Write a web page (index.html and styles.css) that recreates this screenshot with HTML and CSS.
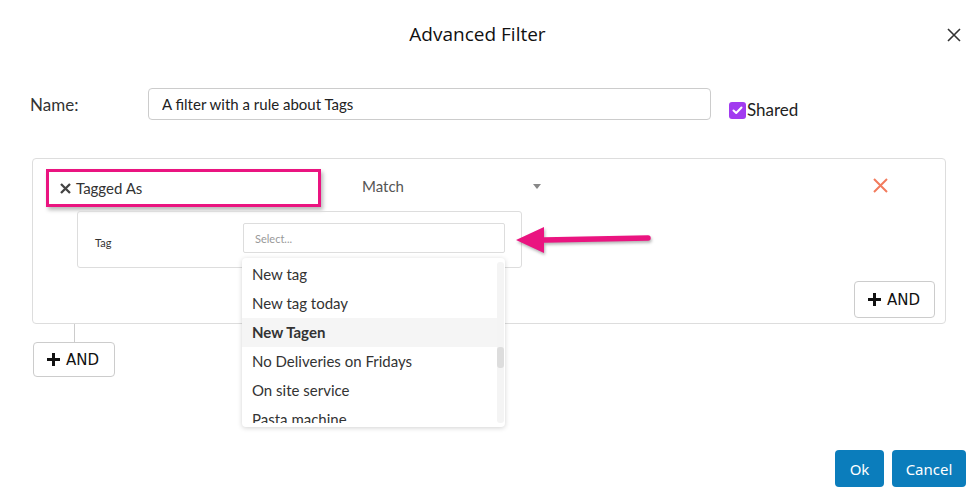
FILE: index.html
```html
<!DOCTYPE html>
<html lang="en">
<head>
    <meta charset="UTF-8">
    <title>Advanced Filter</title>
    <link rel="stylesheet" href="styles.css">
</head>
<body>
    <div class="modal">
        <header class="modal-header">
            <span></span>
            <h2>Advanced Filter</h2>
            <button class="close" aria-label="Close">
                <svg width="14" height="14" viewBox="0 0 14 14"><path d="M1 1L13 13M13 1L1 13" stroke="#333" stroke-width="1.6"/></svg>
            </button>
        </header>

        <div class="name-row">
            <label class="name-label">Name:</label>
            <input class="name-input" type="text" value="A filter with a rule about Tags">
            <label class="shared">
                <span class="check">
                    <svg width="11" height="9" viewBox="0 0 11 9"><path d="M1.5 4.5L4.2 7L9.5 1.5" fill="none" stroke="#fff" stroke-width="2" stroke-linecap="round" stroke-linejoin="round"/></svg>
                </span>Shared
            </label>
        </div>

        <div class="rule">
            <div class="rule-head">
                <div class="field-chip">
                    <svg width="11" height="11" viewBox="0 0 11 11"><path d="M1 1L10 10M10 1L1 10" stroke="#444" stroke-width="2.3"/></svg>
                    <span>Tagged As</span>
                </div>
                <div class="match">Match <span class="caret"></span></div>
                <button class="remove" aria-label="Remove">
                    <svg width="15" height="15" viewBox="0 0 15 15"><path d="M1 1L14 14M14 1L1 14" stroke="#f27b5d" stroke-width="2"/></svg>
                </button>
            </div>

            <div class="sub-rule">
                <span class="sub-label">Tag</span>
                <div class="select-wrap">
                    <div class="select">Select...</div>
                    <div class="menu">
                        <ul class="menu-list">
                            <li>New tag</li>
                            <li>New tag today</li>
                            <li class="active">New Tagen</li>
                            <li>No Deliveries on Fridays</li>
                            <li>On site service</li>
                            <li>Pasta machine</li>
                        </ul>
                        <div class="scroll"><div class="thumb"></div></div>
                    </div>
                    <svg class="arrow" width="150" height="42" viewBox="0 0 150 42">
                        <path d="M34 20L138 18" stroke="#ea1480" stroke-width="5.5" stroke-linecap="round"/>
                        <path d="M6 20L34 7L34 33Z" fill="#ea1480"/>
                    </svg>
                </div>
            </div>

            <button class="and-btn inner">
                <svg width="13" height="13" viewBox="0 0 13 13"><path d="M6.5 0V13M0 6.5H13" stroke="#111" stroke-width="3"/></svg>
                AND
            </button>
        </div>

        <div class="connector"></div>
        <button class="and-btn outer">
            <svg width="13" height="13" viewBox="0 0 13 13"><path d="M6.5 0V13M0 6.5H13" stroke="#111" stroke-width="3"/></svg>
            AND
        </button>

        <footer class="modal-footer">
            <button class="btn-primary ok">Ok</button>
            <button class="btn-primary">Cancel</button>
        </footer>
    </div>
</body>
</html>
```

FILE: styles.css
```css
*{
    box-sizing: border-box;
}
body{
    margin: 0;
    padding: 0;
    background-color: #fff;
    font-family: "Lato", "Liberation Sans", sans-serif;
    color: #333;
}
button{
    font-family: inherit;
    cursor: pointer;
}
.modal{
    width: 975px;
    height: 502px;
}
.modal-header{
    display: grid;
    grid-template-columns: 1fr auto 1fr;
    align-items: center;
    height: 68px;
}
.modal-header h2{
    margin: 0;
    font-family: "Open Sans", "Noto Sans", sans-serif;
    font-size: 19px;
    font-weight: 400;
    color: #111;
    padding-right: 20px;
}
.close{
    justify-self: end;
    margin-right: 14px;
    margin-top: 2px;
    border: none;
    background: none;
    padding: 0;
    display: flex;
}
.name-row{
    display: flex;
    align-items: center;
    margin-top: 20px;
    padding-left: 30px;
}
.name-label{
    width: 118px;
    font-size: 17px;
    color: #333;
}
.name-input{
    width: 563px;
    height: 32px;
    border: 1px solid #ccc;
    border-radius: 4px;
    padding: 0 13px;
    font-family: "Lato", sans-serif;
    font-size: 15px;
    color: #222;
    outline: none;
}
.shared{
    align-self: flex-end;
    display: flex;
    align-items: center;
    margin-left: 18px;
    margin-bottom: 0;
    font-size: 17px;
    color: #222;
}
.check{
    width: 17px;
    height: 17px;
    border-radius: 3px;
    background-color: #a23bf0;
    display: flex;
    align-items: center;
    justify-content: center;
    margin-right: 1px;
    margin-top: 2px;
}
.rule{
    display: flex;
    flex-direction: column;
    margin: 38px 0 0 32px;
    width: 914px;
    height: 166px;
    border: 1px solid #ddd;
    border-radius: 4px;
    padding: 10px 10px 5px 13px;
}
.rule-head{
    display: flex;
    align-items: center;
    height: 38px;
}
.field-chip{
    display: flex;
    align-items: center;
    gap: 5px;
    width: 275px;
    height: 38px;
    border: 3px solid #ea1480;
    box-shadow: 2px 3px 4px rgba(0, 0, 0, 0.28);
    padding-left: 11px;
    font-size: 15px;
    color: #333;
}
.field-chip svg{
    margin-top: 1px;
}
.match{
    display: flex;
    align-items: center;
    justify-content: space-between;
    width: 180px;
    margin-left: 41px;
    margin-bottom: 4px;
    font-size: 15px;
    color: #555;
}
.caret{
    width: 0;
    height: 0;
    border-left: 4px solid transparent;
    border-right: 4px solid transparent;
    border-top: 5px solid #888;
    margin-right: 1px;
}
.remove{
    margin-left: auto;
    margin-right: 47px;
    margin-bottom: 5px;
    border: none;
    background: none;
    padding: 0;
    display: flex;
}
.sub-rule{
    display: flex;
    align-items: flex-start;
    margin: 4px 0 0 31px;
    width: 445px;
    height: 57px;
    border: 1px solid #ddd;
    border-radius: 3px;
    padding: 11px 16px 0 17px;
}
.sub-label{
    width: 148px;
    margin-top: 13px;
    font-size: 11px;
    color: #333;
}
.select-wrap{
    position: relative;
    width: 262px;
}
.select{
    height: 30px;
    border: 1px solid #ddd;
    border-radius: 2px;
    padding: 8px 11px;
    font-size: 11px;
    color: #999;
}
.menu{
    position: absolute;
    left: -1px;
    top: 35px;
    width: 263px;
    height: 169px;
    padding: 2px 0 4px;
    background-color: #fff;
    border-radius: 4px;
    box-shadow: 0 1px 5px rgba(0, 0, 0, 0.18);
    z-index: 2;
}
.menu-list{
    height: 163px;
    margin: 0;
    padding: 0;
    list-style: none;
    overflow: hidden;
}
.menu-list li{
    height: 29px;
    line-height: 29px;
    padding-left: 10px;
    margin-right: 8px;
    font-size: 15px;
    color: #333;
    white-space: nowrap;
}
.menu-list li.active{
    background-color: #f5f5f5;
    font-weight: 700;
}
.scroll{
    position: absolute;
    right: 1px;
    top: 4px;
    bottom: 4px;
    width: 7px;
    background-color: #f4f4f4;
    border-radius: 3px;
}
.thumb{
    margin-top: 85px;
    height: 21px;
    background-color: #ddd;
    border-radius: 3px;
}
.arrow{
    position: absolute;
    left: 267px;
    top: -3px;
    filter: drop-shadow(1px 2px 1.5px rgba(0, 0, 0, 0.3));
    z-index: 3;
}
.and-btn{
    display: flex;
    align-items: center;
    gap: 6px;
    background-color: #fff;
    border: 1px solid #ccc;
    border-radius: 4px;
    font-family: "DejaVu Sans", sans-serif;
    font-size: 15px;
    color: #111;
    padding: 0 0 0 13px;
}
.and-btn.inner{
    align-self: flex-end;
    margin-top: 13px;
    width: 81px;
    height: 37px;
}
.connector{
    width: 1px;
    height: 18px;
    margin-left: 74px;
    background-color: #ccc;
}
.and-btn.outer{
    margin-left: 33px;
    width: 82px;
    height: 35px;
}
.modal-footer{
    display: flex;
    justify-content: flex-end;
    gap: 8px;
    margin-top: 73px;
    padding-right: 9px;
}
.btn-primary{
    height: 37px;
    padding: 0;
    width: 74px;
    border: none;
    border-radius: 4px;
    background-color: #0b7dbc;
    color: #fff;
    font-family: "Noto Sans", "Open Sans", sans-serif;
    font-size: 15px;
}
.btn-primary.ok{
    width: 49px;
}
```
